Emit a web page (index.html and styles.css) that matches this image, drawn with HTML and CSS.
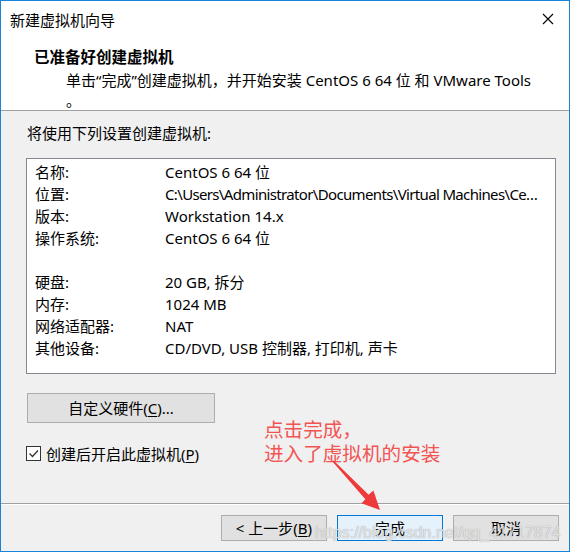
FILE: index.html
```html
<!DOCTYPE html>
<html lang="zh-CN">
<head>
<meta charset="utf-8">
<title>新建虚拟机向导</title>
<link rel="stylesheet" href="styles.css">
</head>
<body>
<div class="window">
  <div class="titlebar">
    <span class="title">新建虚拟机向导</span>
    <svg class="close" width="12" height="12" viewBox="0 0 12 12"><path d="M1 1 L11 11 M11 1 L1 11" stroke="#000" stroke-width="1.1" fill="none"/></svg>
  </div>
  <div class="header">
    <div class="h-title">已准备好创建虚拟机</div>
    <div class="h-sub"><span class="nowrap">单击“完成”创建虚拟机，并开始安装 CentOS 6 64 位 和 VMware Tools</span><br>。</div>
  </div>
  <div class="content">
    <div class="intro">将使用下列设置创建虚拟机:</div>
    <div class="summary">
      <div class="row"><span class="k">名称:</span><span class="v">CentOS 6 64 位</span></div>
      <div class="row"><span class="k">位置:</span><span class="v path">C:\Users\Administrator\Documents\Virtual Machines\Ce…</span></div>
      <div class="row"><span class="k">版本:</span><span class="v">Workstation 14.x</span></div>
      <div class="row"><span class="k">操作系统:</span><span class="v">CentOS 6 64 位</span></div>
      <div class="row"></div>
      <div class="row"><span class="k">硬盘:</span><span class="v">20 GB, 拆分</span></div>
      <div class="row"><span class="k">内存:</span><span class="v">1024 MB</span></div>
      <div class="row"><span class="k">网络适配器:</span><span class="v">NAT</span></div>
      <div class="row"><span class="k">其他设备:</span><span class="v">CD/DVD, USB 控制器, 打印机, 声卡</span></div>
    </div>
    <button class="btn custom">自定义硬件(<u>C</u>)...</button>
    <label class="check">
      <span class="box"><svg width="13" height="13" viewBox="0 0 13 13"><path d="M2.5 6.5 L5.5 9.5 L11 3.5" stroke="#333" stroke-width="1.3" fill="none"/></svg></span>
      <span>创建后开启此虚拟机(<u>P</u>)</span>
    </label>
  </div>
  <div class="footer">
    <button class="btn">&lt; 上一步(<u>B</u>)</button>
    <button class="btn primary">完成</button>
    <button class="btn">取消</button>
  </div>
  <div class="note"><div>点击完成，</div><div>进入了虚拟机的安装</div></div>
  <svg class="arrow" width="570" height="552" viewBox="0 0 570 552">
    <polygon points="333.6,460.4 368.6,494.7 373.4,490.6 380,510 361.4,503.2 365.4,499.3 332.4,461.6" fill="#ee3a3a"/>
  </svg>
  <div class="watermark">https://blog.csdn.net/qq_41717874</div>
</div>
</body>
</html>
```
FILE: styles.css
```css
* { box-sizing: border-box; }
html, body { margin: 0; padding: 0; }
body {
  font-family: "Noto Sans", "Noto Sans CJK SC", sans-serif;
  font-size: 15px;
  color: #000;
  background: #f0f0f0;
}
.window {
  position: relative;
  width: 570px;
  height: 552px;
  border: 1px solid #1883d7;
  background: #f0f0f0;
  display: flex;
  flex-direction: column;
  overflow: hidden;
}
.titlebar {
  height: 38px;
  background: #fff;
  display: flex;
  align-items: center;
  justify-content: space-between;
  padding: 0 15px 0 9px;
}
.title { line-height: 20px; }
.close { display: block; margin-top: -2px; }
.header {
  background: #fff;
  height: 72px;
  border-bottom: 1px solid #a0a0a0;
  padding: 8px 0 0 33px;
}
.h-title {
  font-weight: bold;
  line-height: 20px;
  font-size: 15.5px;
}
.h-sub {
  margin-top: 3px;
  padding-left: 32px;
  line-height: 20px;
}
.nowrap { white-space: nowrap; }
.content {
  flex: 1;
  padding: 12px 14px 0 25px;
  display: flex;
  flex-direction: column;
  align-items: flex-start;
}
.intro { line-height: 20px; padding-left: 1px; }
.summary {
  margin-top: 15px;
  width: 530px;
  height: 216px;
  background: #fff;
  border: 1px solid #828790;
  padding: 2px 8px 0 8px;
}
.row {
  height: 22px;
  line-height: 22px;
  display: flex;
  white-space: nowrap;
}
.k { width: 130px; flex: none; }
.v {
  flex: 1;
  min-width: 0;
  overflow: hidden;
}
.path { letter-spacing: -0.65px; }
.btn {
  font: inherit;
  color: #000;
  background: #e1e1e1;
  border: 1px solid #adadad;
  padding: 0;
  margin: 0;
  height: 26px;
  width: 106px;
  line-height: 22px;
  text-align: center;
}
.btn u { text-underline-offset: 2px; }
.custom {
  margin-top: 19px;
  margin-left: 1px;
  width: 188px;
  height: 30px;
}
.check {
  margin-top: 23px;
  display: flex;
  align-items: center;
  gap: 5px;
  line-height: 20px;
  height: 15px;
}
.box {
  width: 15px;
  height: 15px;
  border: 1px solid #333;
  background: #fff;
  display: flex;
  align-items: center;
  justify-content: center;
}
.box svg { display: block; }
.check u { text-underline-offset: 2px; }
.footer {
  height: 48px;
  flex: none;
  border-top: 1px solid #a0a0a0;
  box-shadow: inset 0 1px 0 #fff;
  padding: 11px 10px 0 0;
  display: flex;
  justify-content: flex-end;
  align-items: flex-start;
  gap: 10px;
}
.primary {
  background: #e5f1fb;
  border-color: #0078d7;
}
.note {
  position: absolute;
  left: 263px;
  top: 416px;
  font-family: "Noto Sans CJK SC", sans-serif;
  font-size: 19.6px;
  line-height: 24px;
  color: #f25454;
}
.arrow {
  position: absolute;
  left: -1px;
  top: -1px;
  pointer-events: none;
}
.watermark {
  position: absolute;
  left: 314px;
  top: 522px;
  font-family: "Liberation Sans", sans-serif;
  font-size: 16px;
  line-height: 20px;
  color: rgba(238, 238, 238, 0.85);
  text-shadow: 0 0 1px rgba(110, 110, 110, 0.7);
  white-space: nowrap;
  pointer-events: none;
}
```
